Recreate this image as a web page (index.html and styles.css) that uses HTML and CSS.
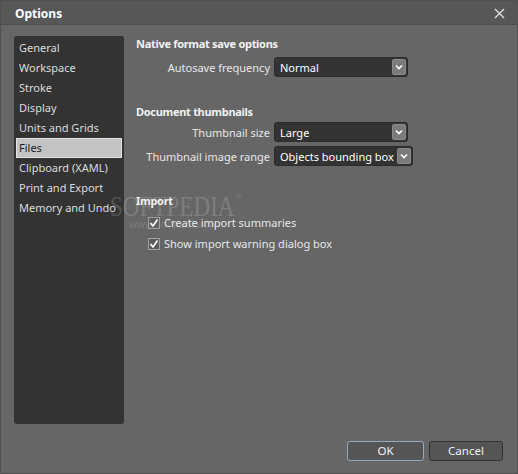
FILE: index.html
```html
<!DOCTYPE html>
<html>
<head>
<meta charset="utf-8">
<link rel="stylesheet" href="styles.css">
</head>
<body>
<div class="window">
  <div class="titlebar">
    <span class="title">Options</span>
    <svg class="close" width="11" height="11" viewBox="0 0 11 11"><path d="M1 1 L10 10 M10 1 L1 10" stroke="#e0e0e0" stroke-width="1.4" fill="none"/></svg>
  </div>
  <div class="main">
    <div class="sidebar">
      <div class="item">General</div>
      <div class="item">Workspace</div>
      <div class="item">Stroke</div>
      <div class="item">Display</div>
      <div class="item">Units and Grids</div>
      <div class="item sel">Files</div>
      <div class="item">Clipboard (XAML)</div>
      <div class="item">Print and Export</div>
      <div class="item">Memory and Undo</div>
    </div>
    <div class="content">
      <div class="heading h1">Native format save options</div>
      <div class="row r1">
        <span class="label">Autosave frequency</span>
        <div class="select"><span class="val">Normal</span><span class="arrow"><svg width="8" height="6" viewBox="0 0 8 6"><path d="M1 1.5 L4 4.5 L7 1.5" stroke="#fff" stroke-width="1.6" fill="none"/></svg></span></div>
      </div>
      <div class="heading h2">Document thumbnails</div>
      <div class="row r2">
        <span class="label">Thumbnail size</span>
        <div class="select"><span class="val">Large</span><span class="arrow"><svg width="8" height="6" viewBox="0 0 8 6"><path d="M1 1.5 L4 4.5 L7 1.5" stroke="#fff" stroke-width="1.6" fill="none"/></svg></span></div>
      </div>
      <div class="row r3">
        <span class="label">Thumbnail image range</span>
        <div class="select wide"><span class="val">Objects bounding box</span><span class="arrow"><svg width="8" height="6" viewBox="0 0 8 6"><path d="M1 1.5 L4 4.5 L7 1.5" stroke="#fff" stroke-width="1.6" fill="none"/></svg></span></div>
      </div>
      <div class="heading h3">Import</div>
      <div class="check c1"><span class="box"><svg width="10" height="10" viewBox="0 0 10 10"><path d="M1.5 5 L4 8 L8.5 1.5" stroke="#fff" stroke-width="1.6" fill="none"/></svg></span>Create import summaries</div>
      <div class="check"><span class="box"><svg width="10" height="10" viewBox="0 0 10 10"><path d="M1.5 5 L4 8 L8.5 1.5" stroke="#fff" stroke-width="1.6" fill="none"/></svg></span>Show import warning dialog box</div>
    </div>
  </div>
  <div class="footer">
    <button class="btn ok">OK</button>
    <button class="btn cancel">Cancel</button>
  </div>
  <div class="watermark"><span class="wm-big">SOFTPEDIA</span><span class="tm">™</span></div>
  <div class="wm-url">www.softpedia.com</div>
</div>
</body>
</html>
```
FILE: styles.css
```css
html, body {
  margin: 0;
  padding: 0;
  background: #666;
}
body {
  font-family: "Noto Sans", "Open Sans", sans-serif;
  font-size: 11px;
  color: #e6e6e6;
}
.window {
  position: relative;
  width: 518px;
  height: 474px;
  box-sizing: border-box;
  border: 1px solid #505050;
  background: #666666;
  display: flex;
  flex-direction: column;
  overflow: hidden;
}
.titlebar {
  height: 24px;
  background: #575757;
  border-bottom: 1px solid #4e4e4e;
  box-sizing: border-box;
  display: flex;
  align-items: center;
  justify-content: space-between;
  padding: 1px 12px 0 14px;
}
.title {
  font-weight: bold;
  font-size: 12px;
  color: #fff;
}
.close { display: block; }
.main {
  display: flex;
  flex: 1;
  padding: 11px 0 0 13px;
}
.sidebar {
  width: 110px;
  height: 388px;
  background: #333333;
  border-radius: 3px;
  padding-top: 2px;
  box-sizing: border-box;
}
.item {
  height: 20px;
  line-height: 20px;
  padding-left: 5px;
  color: #dcdcdc;
  white-space: nowrap;
}
.item.sel {
  margin: 0 2px;
  padding-left: 2px;
  height: 18px;
  line-height: 18px;
  background: #c3c3c3;
  border: 1px solid #e2e2e2;
  color: #1e1e1e;
}
.content {
  margin-left: 12px;
  display: flex;
  flex-direction: column;
}
.heading {
  font-weight: bold;
  color: #f2f2f2;
  height: 14px;
  line-height: 14px;
  letter-spacing: -0.3px;
}
.h1 { margin-top: 1px; }
.h2 { margin-top: 28px; }
.h3 { margin-top: 28px; }
.row {
  display: flex;
  align-items: center;
  height: 20px;
}
.r1 { margin-top: 6px; }
.r2 { margin-top: 3px; }
.r3 { margin-top: 4px; }
.label {
  width: 134px;
  text-align: right;
  margin-right: 4px;
  color: #e6e6e6;
  white-space: nowrap;
}
.select {
  width: 134px;
  height: 20px;
  box-sizing: border-box;
  background: #333333;
  border: 1px solid #2c2c2c;
  border-radius: 3px;
  display: flex;
  align-items: center;
  justify-content: space-between;
  padding: 0 1px 0 5px;
  color: #ffffff;
}
.select.wide { width: 139px; padding-left: 5px; }
.val { white-space: nowrap; overflow: hidden; }
.arrow {
  width: 14px;
  height: 16px;
  box-sizing: border-box;
  background: #7b7b7b;
  border: 1px solid #8a8a8a;
  border-radius: 2px;
  display: flex;
  align-items: center;
  justify-content: center;
  flex-shrink: 0;
}
.arrow svg { display: block; }
.check {
  display: flex;
  align-items: center;
  height: 21px;
  padding-left: 12px;
  color: #e6e6e6;
}
.c1 { margin-top: 4px; }
.box {
  width: 12px;
  height: 12px;
  box-sizing: border-box;
  border: 1px solid #a0a0a0;
  background: #5c5c5c;
  margin-right: 4px;
  display: flex;
  align-items: center;
  justify-content: center;
}
.box svg { display: block; }
.footer {
  display: flex;
  justify-content: flex-end;
  gap: 5px;
  padding: 0 14px 12px 0;
}
.btn {
  height: 20px;
  box-sizing: border-box;
  font-family: "Noto Sans", "Open Sans", sans-serif;
  font-size: 11.5px;
  color: #f0f0f0;
  background: #555555;
  border-radius: 3px;
  padding: 0;
  line-height: 16px;
}
.ok {
  width: 77px;
  border: 1px solid #92a9c0;
}
.cancel {
  width: 74px;
  border: 1px solid #333333;
}
.watermark {
  position: absolute;
  left: 109px;
  top: 190px;
  height: 30px;
  line-height: 30px;
  font-family: "Liberation Serif", serif;
  font-size: 30px;
  color: rgba(255, 255, 255, 0.18);
  pointer-events: none;
  white-space: nowrap;
  transform: scaleX(0.77);
  transform-origin: left top;
}
.tm {
  font-size: 9px;
  vertical-align: top;
  line-height: 14px;
  font-family: "Liberation Sans", sans-serif;
}
.wm-url {
  position: absolute;
  left: 128px;
  top: 217px;
  font-family: "Liberation Sans", sans-serif;
  font-size: 11px;
  color: rgba(255, 255, 255, 0.15);
  white-space: nowrap;
}
```
